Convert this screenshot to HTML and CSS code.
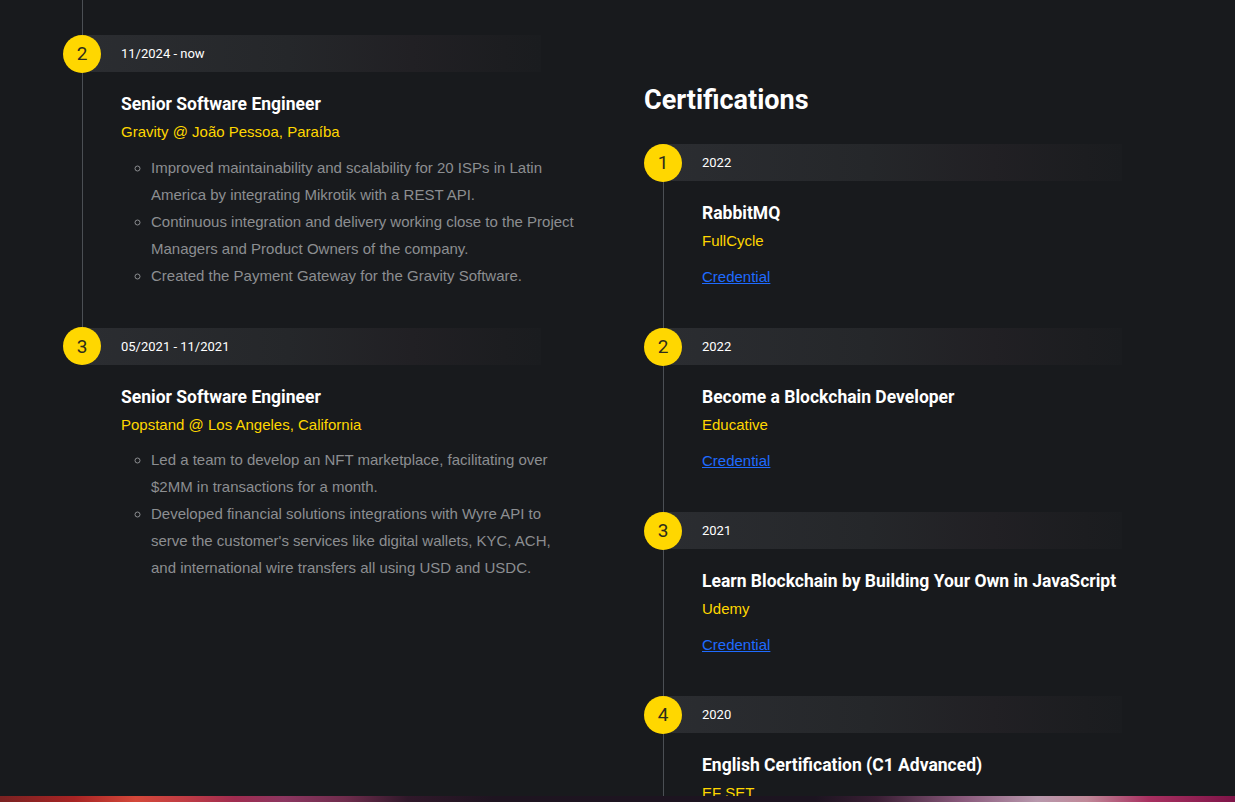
FILE: index.html
```html
<!DOCTYPE html>
<html lang="en">
<head>
<meta charset="utf-8">
<title>Resume</title>
<link rel="stylesheet" href="styles.css">
</head>
<body>
<div class="page">
  <div class="columns">
    <section class="col col-exp">
      <div class="tail"></div>
      <div class="item">
        <div class="item-head">
          <span class="num">2</span>
          <div class="bar">11/2024 - now</div>
        </div>
        <div class="item-body">
          <h3 class="title">Senior Software Engineer</h3>
          <div class="sub">Gravity @ João Pessoa, Paraíba</div>
          <ul class="points">
            <li>Improved maintainability and scalability for 20 ISPs in Latin America by integrating Mikrotik with a REST API.</li>
            <li>Continuous integration and delivery working close to the Project Managers and Product Owners of the company.</li>
            <li>Created the Payment Gateway for the Gravity Software.</li>
          </ul>
        </div>
      </div>
      <div class="item last">
        <div class="item-head">
          <span class="num">3</span>
          <div class="bar">05/2021 - 11/2021</div>
        </div>
        <div class="item-body">
          <h3 class="title">Senior Software Engineer</h3>
          <div class="sub">Popstand @ Los Angeles, California</div>
          <ul class="points">
            <li>Led a team to develop an NFT marketplace, facilitating over $2MM in transactions for a month.</li>
            <li>Developed financial solutions integrations with Wyre API to serve the customer's services like digital wallets, KYC, ACH, and international wire transfers all using USD and USDC.</li>
          </ul>
        </div>
      </div>
    </section>
    <section class="col col-cert">
      <h2 class="section-title">Certifications</h2>
      <div class="item">
        <div class="item-head">
          <span class="num">1</span>
          <div class="bar">2022</div>
        </div>
        <div class="item-body">
          <h3 class="title">RabbitMQ</h3>
          <div class="sub">FullCycle</div>
          <a class="cred" href="#">Credential</a>
        </div>
      </div>
      <div class="item">
        <div class="item-head">
          <span class="num">2</span>
          <div class="bar">2022</div>
        </div>
        <div class="item-body">
          <h3 class="title">Become a Blockchain Developer</h3>
          <div class="sub">Educative</div>
          <a class="cred" href="#">Credential</a>
        </div>
      </div>
      <div class="item">
        <div class="item-head">
          <span class="num">3</span>
          <div class="bar">2021</div>
        </div>
        <div class="item-body">
          <h3 class="title">Learn Blockchain by Building Your Own in JavaScript</h3>
          <div class="sub">Udemy</div>
          <a class="cred" href="#">Credential</a>
        </div>
      </div>
      <div class="item">
        <div class="item-head">
          <span class="num">4</span>
          <div class="bar">2020</div>
        </div>
        <div class="item-body">
          <h3 class="title">English Certification (C1 Advanced)</h3>
          <div class="sub">EF SET</div>
          <a class="cred" href="#">Credential</a>
        </div>
      </div>
    </section>
  </div>
</div>
<div class="glow-strip"></div>
</body>
</html>
```
FILE: styles.css
```css
html, body {
  margin: 0;
  padding: 0;
  height: 100%;
  overflow: hidden;
  background: #181a1d;
}

body {
  font-family: "Liberation Sans", Arial, sans-serif;
  color: #8c8e91;
}

.page {
  height: 100vh;
  overflow: hidden;
}

.columns {
  display: grid;
  grid-template-columns: 515px 1fr;
  column-gap: 66px;
  padding-left: 63px;
}

.col-cert {
  padding-top: 84px;
}

.section-title {
  margin: 0 0 28px;
  font-family: Roboto, "Noto Sans", sans-serif;
  font-weight: 700;
  font-size: 27px;
  line-height: 32px;
  color: #ffffff;
}

.tail {
  height: 35px;
  margin-left: 19px;
  border-left: 1px solid #4b4f54;
}

.item {
  margin-left: 19px;
  border-left: 1px solid #4b4f54;
  padding-bottom: 39px;
}

.item.last {
  border-left-color: transparent;
}

.item-head {
  display: flex;
  align-items: center;
  margin-left: -20px;
  height: 37px;
}

.num {
  position: relative;
  z-index: 1;
  flex: 0 0 38px;
  width: 38px;
  height: 38px;
  border-radius: 50%;
  background: #ffd700;
  color: #2e2c1c;
  font-family: Roboto, "Noto Sans", sans-serif;
  font-weight: 400;
  font-size: 19px;
  display: flex;
  align-items: center;
  justify-content: center;
}

.bar {
  margin-left: -19px;
  width: 420px;
  height: 37px;
  padding-left: 39px;
  display: flex;
  align-items: center;
  background: linear-gradient(90deg, #2b2d31 0%, #25272a 45%, #212024 72%, #1c1d20 92%, #1a1c1f 100%);
  color: #ffffff;
  font-family: Roboto, "Noto Sans", sans-serif;
  font-size: 13px;
}

.item-body {
  padding-left: 38px;
  padding-top: 20px;
}

.title {
  margin: 0 0 4px;
  font-family: Roboto, "Noto Sans", sans-serif;
  font-weight: 700;
  font-size: 17.5px;
  line-height: 24px;
  color: #ffffff;
}

.sub {
  font-size: 15px;
  line-height: 24px;
  color: #ffd700;
}

.points {
  margin: 9.5px 0 0;
  padding-left: 30px;
  list-style: circle;
  font-size: 15px;
  line-height: 27px;
  color: #8c8e91;
}

.cred {
  display: inline-block;
  margin-top: 12px;
  font-size: 15px;
  line-height: 24px;
  color: #1f6bff;
  text-decoration: underline;
}

.glow-strip {
  position: fixed;
  left: 0;
  right: 0;
  bottom: 0;
  height: 6px;
  background: linear-gradient(90deg,
    #7a2222 0%,
    #a82424 6%,
    #d4483a 11%,
    #c03c44 15%,
    #a02c50 19%,
    #8c3660 23%,
    #6e2c4c 28%,
    #30182a 33%,
    #1e1420 40%,
    #1c1420 66%,
    #3a1e34 71%,
    #8a5a7c 78%,
    #b898ac 84%,
    #c08898 88%,
    #a83060 93%,
    #7e1448 100%);
}
```
